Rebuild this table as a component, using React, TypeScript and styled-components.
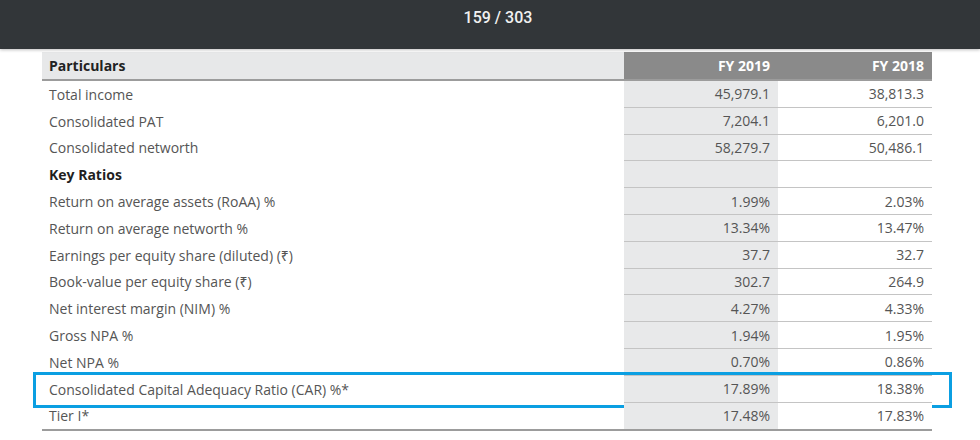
import React from "react";
import styled, { createGlobalStyle } from "styled-components";

const Global = createGlobalStyle`
  html, body { margin: 0; padding: 0; background: #ffffff; }
  body { font-family: "Open Sans", "Noto Sans", sans-serif; overflow: hidden; }
`;

const Page = styled.div`
  width: 980px;
  height: 440px;
  display: flex;
  flex-direction: column;
  background: #ffffff;
`;

const TopBar = styled.div`
  height: 49px;
  flex: none;
  background: #323639;
  display: flex;
  justify-content: center;
  padding-left: 16px;
  padding-top: 8px;
  box-sizing: border-box;
  box-shadow: 0 1px 3px rgba(0, 0, 0, 0.25);
  position: relative;
  z-index: 2;
`;

const Counter = styled.span`
  font-family: Roboto, "Noto Sans", sans-serif;
  font-weight: 500;
  font-size: 16px;
  color: #f1f1f1;
  line-height: 20px;
`;

const Table = styled.div`
  margin: 3px 0 0 42px;
  width: 890px;
  display: flex;
  flex-direction: column;
  border-bottom: 2px solid #9c9c9c;
`;

const Row = styled.div<{ $highlight?: boolean }>`
  display: grid;
  grid-template-columns: 582px 154px 154px;
  height: 26.8px;
  position: relative;
  ${(p) =>
    p.$highlight &&
    `
    &::after {
      content: "";
      position: absolute;
      left: -9px;
      right: -20px;
      top: -4px;
      bottom: -5px;
      border: 3px solid #0b9fe2;
      pointer-events: none;
    }
  `}
`;

const HeadRow = styled.div`
  display: grid;
  grid-template-columns: 582px 154px 154px;
  height: 27px;
  border-bottom: 2px solid #9c9c9c;
`;

const HeadLabel = styled.div`
  background: #e7e8e9;
  color: #222222;
  font-weight: 700;
  font-size: 14px;
  display: flex;
  align-items: center;
  padding-left: 7px;
`;

const HeadYear = styled.div`
  background: #8a8a8a;
  color: #ffffff;
  font-weight: 700;
  font-size: 14px;
  display: flex;
  align-items: center;
  justify-content: flex-end;
  padding-right: 8px;
`;

const Label = styled.div<{ $bold?: boolean }>`
  font-size: 14px;
  color: ${(p) => (p.$bold ? "#1f1f1f" : "#555555")};
  font-weight: ${(p) => (p.$bold ? 700 : 400)};
  display: flex;
  align-items: center;
  padding-left: 7px;
  white-space: nowrap;
`;

const Value = styled.div<{ $shaded?: boolean; $last?: boolean }>`
  font-size: 14px;
  color: #555555;
  display: flex;
  align-items: center;
  justify-content: flex-end;
  padding-right: 8px;
  background: ${(p) => (p.$shaded ? "#e8e9ea" : "#ffffff")};
  border-bottom: ${(p) => (p.$last ? "none" : "1px solid #c4c4c4")};
`;

type Item = { label: string; a: string; b: string; bold?: boolean; highlight?: boolean };

const rows: Item[] = [
  { label: "Total income", a: "45,979.1", b: "38,813.3" },
  { label: "Consolidated PAT", a: "7,204.1", b: "6,201.0" },
  { label: "Consolidated networth", a: "58,279.7", b: "50,486.1" },
  { label: "Key Ratios", a: "", b: "", bold: true },
  { label: "Return on average assets (RoAA) %", a: "1.99%", b: "2.03%" },
  { label: "Return on average networth %", a: "13.34%", b: "13.47%" },
  { label: "Earnings per equity share (diluted) (₹)", a: "37.7", b: "32.7" },
  { label: "Book-value per equity share (₹)", a: "302.7", b: "264.9" },
  { label: "Net interest margin (NIM) %", a: "4.27%", b: "4.33%" },
  { label: "Gross NPA %", a: "1.94%", b: "1.95%" },
  { label: "Net NPA %", a: "0.70%", b: "0.86%" },
  { label: "Consolidated Capital Adequacy Ratio (CAR) %*", a: "17.89%", b: "18.38%", highlight: true },
  { label: "Tier I*", a: "17.48%", b: "17.83%" },
];

export default function App() {
  return (
    <Page>
      <Global />
      <TopBar>
        <Counter>159 / 303</Counter>
      </TopBar>
      <Table>
        <HeadRow>
          <HeadLabel>Particulars</HeadLabel>
          <HeadYear>FY 2019</HeadYear>
          <HeadYear>FY 2018</HeadYear>
        </HeadRow>
        {rows.map((r, i) => {
          const last = i === rows.length - 1;
          return (
            <Row key={r.label} $highlight={r.highlight}>
              <Label $bold={r.bold}>{r.label}</Label>
              <Value $shaded $last={last}>{r.a}</Value>
              <Value $last={last}>{r.b}</Value>
            </Row>
          );
        })}
      </Table>
    </Page>
  );
}
